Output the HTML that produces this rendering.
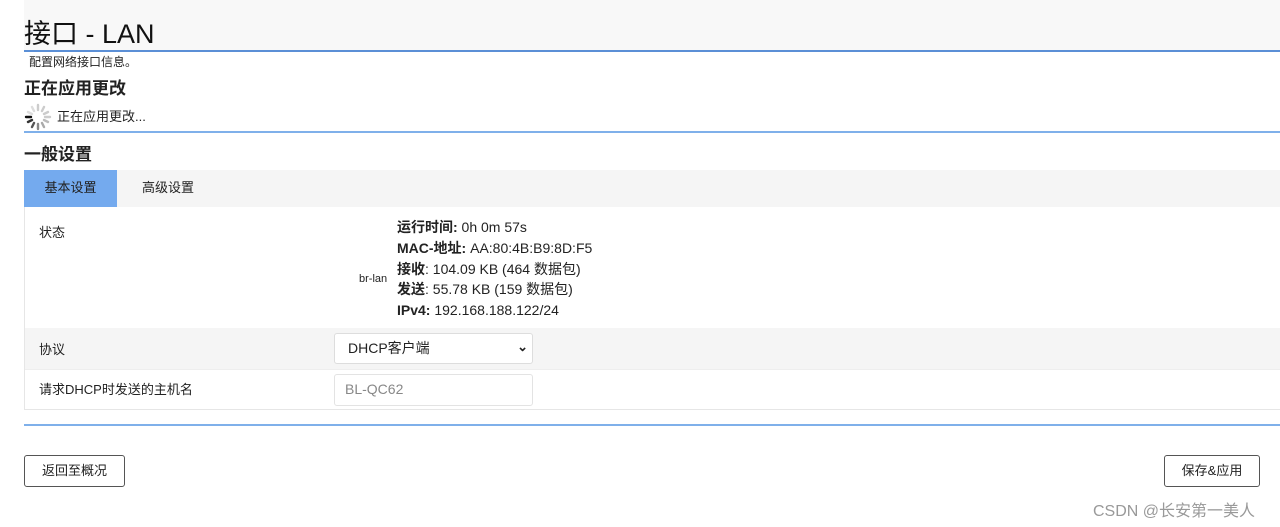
<!DOCTYPE html>
<html><head><meta charset="utf-8"><style>
body{margin:0;width:1280px;height:527px;background:#fff;font-family:"Liberation Sans","Noto Sans CJK SC",sans-serif;color:#222;position:relative;overflow:hidden}
.a{position:absolute}
.hdr{left:24px;top:0;width:1256px;height:50px;background:#f8f8f8}
.line{left:24px;width:1256px;background:#5b8fd6}
</style></head><body>
<div class="a hdr"></div>
<div class="a" style="left:24px;top:12px;font-size:27px;color:#111">接口 - LAN</div>
<div class="a line" style="top:50px;height:2px"></div>
<div class="a" style="left:29px;top:53px;font-size:12px">配置网络接口信息。</div>
<div class="a" style="left:24px;top:74px;font-size:17px;font-weight:bold">正在应用更改</div>
<svg class="a" style="left:24px;top:103px" width="28" height="28" viewBox="0 0 28 28">
<g stroke-width="2.4" stroke-linecap="round">
<line x1="14" y1="2" x2="14" y2="7" stroke="#ccc"/>
<line x1="20" y1="4" x2="18" y2="8" stroke="#ccc"/>
<line x1="24" y1="9" x2="20" y2="11" stroke="#ccc"/>
<line x1="26" y1="14" x2="21" y2="14" stroke="#ccc"/>
<line x1="24" y1="19" x2="20" y2="17" stroke="#bbb"/>
<line x1="20" y1="24" x2="18" y2="20" stroke="#aaa"/>
<line x1="14" y1="26" x2="14" y2="21" stroke="#888"/>
<line x1="8" y1="24" x2="10" y2="20" stroke="#555"/>
<line x1="4" y1="19" x2="8" y2="17" stroke="#333"/>
<line x1="2" y1="14" x2="7" y2="14" stroke="#111"/>
<line x1="4" y1="9" x2="8" y2="11" stroke="#ddd"/>
<line x1="8" y1="4" x2="10" y2="8" stroke="#ddd"/>
</g></svg>
<div class="a" style="left:57px;top:106px;font-size:13px">正在应用更改...</div>
<div class="a line" style="top:131px;height:2px;background:#7fb0ea"></div>
<div class="a" style="left:24px;top:140px;font-size:17px;font-weight:bold">一般设置</div>
<div class="a" style="left:24px;top:170px;width:1256px;height:37px;background:#f5f5f5"></div>
<div class="a" style="left:24px;top:170px;width:93px;height:37px;background:#74aaee;font-size:13px;line-height:36px;text-align:center">基本设置</div>
<div class="a" style="left:142px;top:170px;font-size:13px;line-height:36px">高级设置</div>
<div class="a" style="left:24px;top:207px;width:1255px;height:202px;border:1px solid #e6e6e6;border-top:none"></div>
<div class="a" style="left:25px;top:328px;width:1255px;height:42px;background:#f5f5f5"></div>
<div class="a" style="left:25px;top:369px;width:1255px;height:1px;background:#eee"></div>
<div class="a" style="left:39px;top:222px;font-size:13px">状态</div>
<div class="a" style="left:359px;top:273px;font-size:11px">br-lan</div>
<div class="a" style="left:397px;top:217px;font-size:14px;line-height:20.8px">
<b>运行时间:</b> 0h 0m 57s<br><b>MAC-地址:</b> AA:80:4B:B9:8D:F5<br><b>接收</b>: 104.09 KB (464 数据包)<br><b>发送</b>: 55.78 KB (159 数据包)<br><b>IPv4:</b> 192.168.188.122/24</div>
<div class="a" style="left:39px;top:339px;font-size:13px">协议</div>
<div class="a" style="left:334px;top:333px;width:199px;height:31px;border:1px solid #ddd;border-radius:3px;background:#fff;font-size:14px;line-height:29px;box-sizing:border-box;padding-left:13px">DHCP客户端<span style="position:absolute;right:4px;top:-2px;font-size:13px;font-weight:bold">&#8964;</span></div>
<div class="a" style="left:39px;top:379px;font-size:13px">请求DHCP时发送的主机名</div>
<div class="a" style="left:334px;top:374px;width:199px;height:32px;border:1px solid #e3e3e3;border-radius:3px;box-sizing:border-box;font-size:14px;color:#888;line-height:29px;padding-left:10px">BL-QC62</div>
<div class="a line" style="top:424px;height:2px;background:#7fb0ea"></div>
<div class="a" style="left:24px;top:455px;width:101px;height:32px;border:1px solid #555;border-radius:3px;box-sizing:border-box;font-size:13px;line-height:29px;text-align:center">返回至概况</div>
<div class="a" style="left:1164px;top:455px;width:96px;height:32px;border:1px solid #555;border-radius:3px;box-sizing:border-box;font-size:13px;line-height:29px;text-align:center">保存&amp;应用</div>
<div class="a" style="left:1093px;top:497px;font-size:16px;color:#999">CSDN @长安第一美人</div>
</body></html>
